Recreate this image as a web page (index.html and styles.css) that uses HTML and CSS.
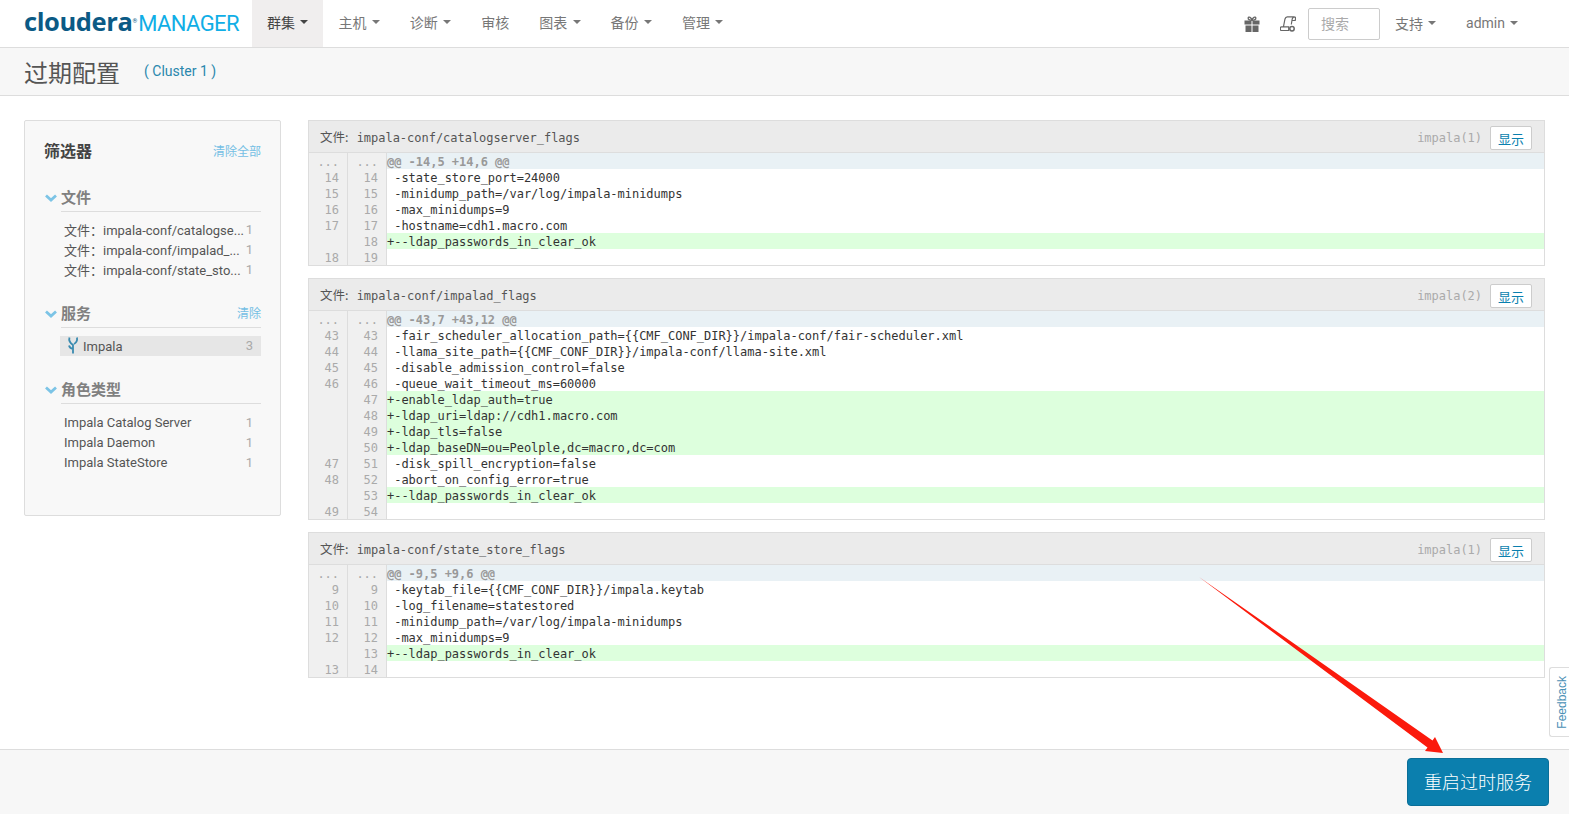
FILE: index.html
```html
<!DOCTYPE html>
<html lang="zh-CN">
<head>
  <meta charset="UTF-8" />
  <title>过期配置</title>
  <link rel="stylesheet" href="styles.css">
</head>
<body>
  <nav class="navbar">
    <a class="brand"><span class="brand-cloudera">cloudera</span><span class="brand-reg">®</span><span class="brand-manager">MANAGER</span></a>
    <ul class="nav-list">
      <li class="active">群集 <i class="caret"></i></li>
      <li>主机 <i class="caret"></i></li>
      <li>诊断 <i class="caret"></i></li>
      <li>审核</li>
      <li>图表 <i class="caret"></i></li>
      <li>备份 <i class="caret"></i></li>
      <li>管理 <i class="caret"></i></li>
    </ul>
    <div class="nav-right">
      <svg class="nav-icon" viewBox="0 0 16 16" width="16" height="16"><path fill="#666" d="M.5 4.500h7v4h-7zM8.500 4.500h7v4h-7zM1.500 9.500h6V16h-6zM8.500 9.500h6V16h-6z"/><path fill="none" stroke="#666" stroke-width="1.300" d="M8 4.300C5.500 4.300 3.800 3.300 4.200 1.800 4.700.5 7.300 1 8 4.300c.7-3.300 3.300-3.800 3.800-2.500.4 1.500-1.300 2.500-3.800 2.500z"/></svg>
      <svg class="nav-icon" viewBox="0 0 16 16" width="16" height="16"><path fill="none" stroke="#666" stroke-width="1.200" d="M3.500 10.500L5 3c.3-1.300 1-2.200 2.300-2.200h7.200c-1.200 0-2 .9-2.300 2.200l-.9 5.500M12.400 4.500h2.800l.3-1.700c.2-1.200-.3-2-1-2M1.500 10.800h7.200v3.700H1.500c-.8 0-1.200-.8-1.200-1.800s.4-1.900 1.200-1.900z"/><circle cx="12" cy="12.800" r="2.200" fill="none" stroke="#666" stroke-width="1.500"/></svg>
      <div class="search">搜索</div>
      <span class="nav-link">支持 <i class="caret"></i></span>
      <span class="nav-link">admin <i class="caret"></i></span>
    </div>
  </nav>

  <header class="page-title">
    <h1>过期配置</h1>
    <a class="cluster-link">( Cluster 1 )</a>
  </header>

  <div class="content">
    <aside class="filters">
      <div class="filters-head">
        <h2>筛选器</h2>
        <a class="clear">清除全部</a>
      </div>

      <div class="filter-group">
        <div class="group-head">
          <svg class="chev" viewBox="0 0 12 8" width="12" height="8"><path d="M1 1.500l5 4.500 5-4.500" fill="none" stroke="#7cc4e6" stroke-width="2.800"/></svg>
          <h3>文件</h3>
        </div>
        <ul class="filter-items">
          <li class="cjk"><span class="name">文件：impala-conf/catalogse...</span><span class="num">1</span></li>
          <li class="cjk"><span class="name">文件：impala-conf/impalad_...</span><span class="num">1</span></li>
          <li class="cjk"><span class="name">文件：impala-conf/state_sto...</span><span class="num">1</span></li>
        </ul>
      </div>

      <div class="filter-group">
        <div class="group-head">
          <svg class="chev" viewBox="0 0 12 8" width="12" height="8"><path d="M1 1.500l5 4.500 5-4.500" fill="none" stroke="#7cc4e6" stroke-width="2.800"/></svg>
          <h3>服务</h3>
          <a class="clear">清除</a>
        </div>
        <ul class="filter-items">
          <li class="selected">
            <span class="name">
              <svg class="impala" viewBox="0 0 12 17" width="12" height="17"><path fill="none" stroke="#3a8bb0" stroke-width="1.800" d="M2.500 .5c-1 3 0 5 3.500 7.500v8.500M10 .5c.5 3-.5 5-3 6.500M2 8.500c.5 2 2 3 4 3.500"/></svg>Impala</span>
            <span class="num">3</span>
          </li>
        </ul>
      </div>

      <div class="filter-group">
        <div class="group-head">
          <svg class="chev" viewBox="0 0 12 8" width="12" height="8"><path d="M1 1.500l5 4.500 5-4.500" fill="none" stroke="#7cc4e6" stroke-width="2.800"/></svg>
          <h3>角色类型</h3>
        </div>
        <ul class="filter-items">
          <li><span class="name">Impala Catalog Server</span><span class="num">1</span></li>
          <li><span class="name">Impala Daemon</span><span class="num">1</span></li>
          <li><span class="name">Impala StateStore</span><span class="num">1</span></li>
        </ul>
      </div>
    </aside>

    <main class="diffs">
      <section class="diff">
        <div class="diff-head">
          <span class="file"><span class="file-label">文件:</span> impala-conf/catalogserver_flags</span>
          <span class="svc">impala(1)</span>
          <button class="show">显示</button>
        </div>
        <div class="row hunk"><span class="ln">...</span><span class="ln">...</span><code>@@ -14,5 +14,6 @@</code></div>
        <div class="row"><span class="ln">14</span><span class="ln">14</span><code> -state_store_port=24000</code></div>
        <div class="row"><span class="ln">15</span><span class="ln">15</span><code> -minidump_path=/var/log/impala-minidumps</code></div>
        <div class="row"><span class="ln">16</span><span class="ln">16</span><code> -max_minidumps=9</code></div>
        <div class="row"><span class="ln">17</span><span class="ln">17</span><code> -hostname=cdh1.macro.com</code></div>
        <div class="row add"><span class="ln"></span><span class="ln">18</span><code>+--ldap_passwords_in_clear_ok</code></div>
        <div class="row"><span class="ln">18</span><span class="ln">19</span><code></code></div>
      </section>

      <section class="diff">
        <div class="diff-head">
          <span class="file"><span class="file-label">文件:</span> impala-conf/impalad_flags</span>
          <span class="svc">impala(2)</span>
          <button class="show">显示</button>
        </div>
        <div class="row hunk"><span class="ln">...</span><span class="ln">...</span><code>@@ -43,7 +43,12 @@</code></div>
        <div class="row"><span class="ln">43</span><span class="ln">43</span><code> -fair_scheduler_allocation_path={{CMF_CONF_DIR}}/impala-conf/fair-scheduler.xml</code></div>
        <div class="row"><span class="ln">44</span><span class="ln">44</span><code> -llama_site_path={{CMF_CONF_DIR}}/impala-conf/llama-site.xml</code></div>
        <div class="row"><span class="ln">45</span><span class="ln">45</span><code> -disable_admission_control=false</code></div>
        <div class="row"><span class="ln">46</span><span class="ln">46</span><code> -queue_wait_timeout_ms=60000</code></div>
        <div class="row add"><span class="ln"></span><span class="ln">47</span><code>+-enable_ldap_auth=true</code></div>
        <div class="row add"><span class="ln"></span><span class="ln">48</span><code>+-ldap_uri=ldap://cdh1.macro.com</code></div>
        <div class="row add"><span class="ln"></span><span class="ln">49</span><code>+-ldap_tls=false</code></div>
        <div class="row add"><span class="ln"></span><span class="ln">50</span><code>+-ldap_baseDN=ou=Peolple,dc=macro,dc=com</code></div>
        <div class="row"><span class="ln">47</span><span class="ln">51</span><code> -disk_spill_encryption=false</code></div>
        <div class="row"><span class="ln">48</span><span class="ln">52</span><code> -abort_on_config_error=true</code></div>
        <div class="row add"><span class="ln"></span><span class="ln">53</span><code>+--ldap_passwords_in_clear_ok</code></div>
        <div class="row"><span class="ln">49</span><span class="ln">54</span><code></code></div>
      </section>

      <section class="diff">
        <div class="diff-head">
          <span class="file"><span class="file-label">文件:</span> impala-conf/state_store_flags</span>
          <span class="svc">impala(1)</span>
          <button class="show">显示</button>
        </div>
        <div class="row hunk"><span class="ln">...</span><span class="ln">...</span><code>@@ -9,5 +9,6 @@</code></div>
        <div class="row"><span class="ln">9</span><span class="ln">9</span><code> -keytab_file={{CMF_CONF_DIR}}/impala.keytab</code></div>
        <div class="row"><span class="ln">10</span><span class="ln">10</span><code> -log_filename=statestored</code></div>
        <div class="row"><span class="ln">11</span><span class="ln">11</span><code> -minidump_path=/var/log/impala-minidumps</code></div>
        <div class="row"><span class="ln">12</span><span class="ln">12</span><code> -max_minidumps=9</code></div>
        <div class="row add"><span class="ln"></span><span class="ln">13</span><code>+--ldap_passwords_in_clear_ok</code></div>
        <div class="row"><span class="ln">13</span><span class="ln">14</span><code></code></div>
      </section>
    </main>
  </div>

  <footer class="action-bar">
    <button class="restart">重启过时服务</button>
  </footer>

  <a class="feedback"><span>Feedback</span></a>

  <!-- 标注箭头 -->
  <svg class="arrow" width="1569" height="814" viewBox="0 0 1569 814">
    <path fill="#fb1a0c" d="M1199 577 L1432.500 740.500 L1435 737 L1443 753 L1425 751 L1427.500 747.500 Z"/>
  </svg>
</body>
</html>
```

FILE: styles.css
```css
* {
  box-sizing: border-box;
}
html, body {
  height: 100%;
}
body {
  margin: 0;
  display: flex;
  flex-direction: column;
  height: 814px;
  overflow: hidden;
  font-family: Roboto, "Noto Sans CJK SC", sans-serif;
  font-size: 13px;
  color: #444;
  background: #fff;
}
ul {
  list-style: none;
  margin: 0;
  padding: 0;
}
h1, h2, h3 {
  margin: 0;
  font-weight: normal;
}

/* 顶部导航 */
.navbar {
  display: flex;
  align-items: center;
  height: 48px;
  padding-left: 24px;
  border-bottom: 1px solid #ddd;
  background: #fff;
  flex-shrink: 0;
}
.brand {
  display: flex;
  align-items: baseline;
  width: 228px;
  white-space: nowrap;
  padding-bottom: 5px;
}
.brand-cloudera {
  font-family: "Open Sans", sans-serif;
  font-size: 25.5px;
  font-weight: 700;
  letter-spacing: -.4px;
  color: #0b5a85;
}
.brand-reg {
  font-size: 6px;
  color: #0b5a85;
  align-self: flex-start;
  margin: 13px 1px 0 0;
}
.brand-manager {
  font-family: Roboto, sans-serif;
  font-size: 22px;
  letter-spacing: -.6px;
  color: #10aee6;
}
.nav-list {
  display: flex;
  height: 47px;
}
.nav-list li {
  display: flex;
  align-items: center;
  gap: 5.4px;
  padding: 0 15px 3px;
  color: #777;
  font-size: 14px;
  font-family: "Noto Sans CJK SC", sans-serif;
  white-space: nowrap;
}
.nav-list li.active {
  background: #f0eeee;
  color: #444;
}
.nav-list li.active .caret {
  border-top-color: #444;
}
.caret {
  display: inline-block;
  width: 0;
  height: 0;
  border-left: 4px solid transparent;
  border-right: 4px solid transparent;
  border-top: 4px solid #777;
}
.nav-right {
  display: flex;
  align-items: center;
  margin-left: auto;
  padding-right: 51px;
  color: #777;
}
.nav-icon {
  margin-right: 20px;
}
.nav-icon + .nav-icon {
  margin-right: 12px;
}
.search {
  width: 72px;
  height: 32px;
  padding: 0 12px;
  line-height: 30px;
  border: 1px solid #ccc;
  border-radius: 2px;
  color: #aaa;
  font-size: 14px;
  margin-right: 15px;
}
.nav-link {
  display: flex;
  align-items: center;
  gap: 5px;
  padding-bottom: 2px;
  font-size: 14px;
  white-space: nowrap;
}
.nav-link + .nav-link {
  margin-left: 30px;
}

/* 标题栏 */
.page-title {
  display: flex;
  align-items: center;
  height: 48px;
  padding-left: 24px;
  background: #f7f7f7;
  border-bottom: 1px solid #ddd;
  flex-shrink: 0;
}
.page-title h1 {
  font-size: 24px;
  color: #555;
}
.cluster-link {
  margin-left: 24px;
  padding-bottom: 2px;
  font-size: 14px;
  color: #2a87ad;
}

.content {
  display: flex;
  align-items: flex-start;
  flex: 1;
  gap: 27px;
  padding: 24px 24px 0 24px;
  min-height: 0;
}

/* 筛选器 */
.filters {
  width: 257px;
  height: 396px;
  flex-shrink: 0;
  padding: 18px 19px 0 19px;
  background: #f8f8f8;
  border: 1px solid #ddd;
  border-radius: 2px;
}
.filters-head {
  display: flex;
  align-items: center;
  justify-content: space-between;
  height: 24px;
  margin-bottom: 22px;
  padding-bottom: 2px;
}
.filters-head h2 {
  font-size: 16px;
  font-weight: 700;
  color: #444;
}
.clear {
  color: #75bfe4;
  font-size: 12px;
}
.filter-group {
  margin-bottom: 21px;
}
.group-head {
  display: flex;
  align-items: center;
  height: 26px;
  margin-bottom: 9px;
  padding: 0 0 4px 17px;
  position: relative;
}
.group-head::after {
  content: "";
  position: absolute;
  left: 17px;
  right: 0;
  bottom: -1px;
  border-bottom: 1px solid #ddd;
}
.group-head h3 {
  flex: 1;
  font-family: "Noto Sans CJK SC", sans-serif;
  font-size: 15px;
  font-weight: 700;
  color: #808080;
}
.chev {
  position: absolute;
  left: 1px;
  top: 9px;
}
.filter-items {
  margin-left: 16px;
}
.filter-items li {
  display: flex;
  justify-content: space-between;
  align-items: center;
  height: 20px;
  padding: 0 8px 0 4px;
  font-size: 13px;
  color: #555;
}
.filter-items li.cjk,
.filter-items li.selected {
  padding-bottom: 2px;
}
.filter-items li.selected {
  background: #e6e6e6;
}
.filter-items .name {
  white-space: nowrap;
}
.filter-items .num {
  color: #aaa;
}
.impala {
  vertical-align: -3px;
  margin-right: 4px;
  margin-left: 3px;
}

/* diff 区域 */
.diffs {
  flex: 1;
  min-width: 0;
  display: flex;
  flex-direction: column;
  gap: 12px;
}
.diff {
  border: 1px solid #ddd;
  background: #fff;
}
.diff-head {
  display: flex;
  align-items: center;
  height: 32px;
  padding: 0 12px 0 11px;
  background: #ebebeb;
  border-bottom: 1px solid #ddd;
}
.file {
  flex: 1;
  font-family: "DejaVu Sans Mono", "Noto Sans CJK SC", monospace;
  font-size: 12px;
  letter-spacing: -.02px;
  color: #555;
}
.file-label {
  margin-right: 1px;
  font-family: "Noto Sans CJK SC", sans-serif;
  font-size: 12.5px;
}
.svc {
  margin-right: 8px;
  padding-top: 2px;
  font-family: "DejaVu Sans Mono", monospace;
  font-size: 12px;
  letter-spacing: -.02px;
  color: #aaa;
}
.show {
  width: 42px;
  height: 24px;
  margin-top: 3px;
  padding: 0;
  background: #fff;
  border: 1px solid #ccc;
  border-radius: 2px;
  color: #0a7fae;
  font-family: "Noto Sans CJK SC", sans-serif;
  font-size: 13px;
}
.row {
  display: flex;
  height: 16px;
  line-height: 18px;
  overflow: hidden;
  font-family: "DejaVu Sans Mono", monospace;
  font-size: 12px;
  letter-spacing: -.02px;
}
.ln {
  width: 39px;
  padding-right: 8px;
  text-align: right;
  background: #f0f0f0;
  color: #aaa;
  border-right: 1px solid #ddd;
  flex-shrink: 0;
}
.row code {
  flex: 1;
  font-family: inherit;
  white-space: pre;
  color: #333;
}
.hunk code {
  background: #e9f1f5;
  color: #999;
  font-weight: bold;
}
.add code {
  background: #ddffdd;
}

/* 底部操作栏 */
.action-bar {
  display: flex;
  justify-content: flex-end;
  align-items: flex-start;
  height: 65px;
  padding: 8px 20px 0 0;
  background: #f7f7f7;
  border-top: 1px solid #ddd;
  flex-shrink: 0;
}
.restart {
  width: 142px;
  height: 48px;
  padding: 0 0 3px;
  background: #0b7fae;
  border: 1px solid #0a6f98;
  border-radius: 4px;
  color: #fff;
  font-family: "Noto Sans CJK SC", sans-serif;
  font-size: 18px;
  font-weight: 300;
}

.feedback {
  position: absolute;
  right: 0;
  top: 667px;
  width: 20px;
  height: 70px;
  padding-left: 5px;
  display: flex;
  align-items: center;
  justify-content: center;
  background: #fff;
  border: 1px solid #ddd;
  border-right: 0;
  border-radius: 3px 0 0 3px;
}
.feedback span {
  writing-mode: vertical-rl;
  transform: rotate(180deg);
  font-family: "Liberation Sans", sans-serif;
  font-size: 12px;
  color: #4a90b5;
}

.arrow {
  position: absolute;
  left: 0;
  top: 0;
  pointer-events: none;
}
```
